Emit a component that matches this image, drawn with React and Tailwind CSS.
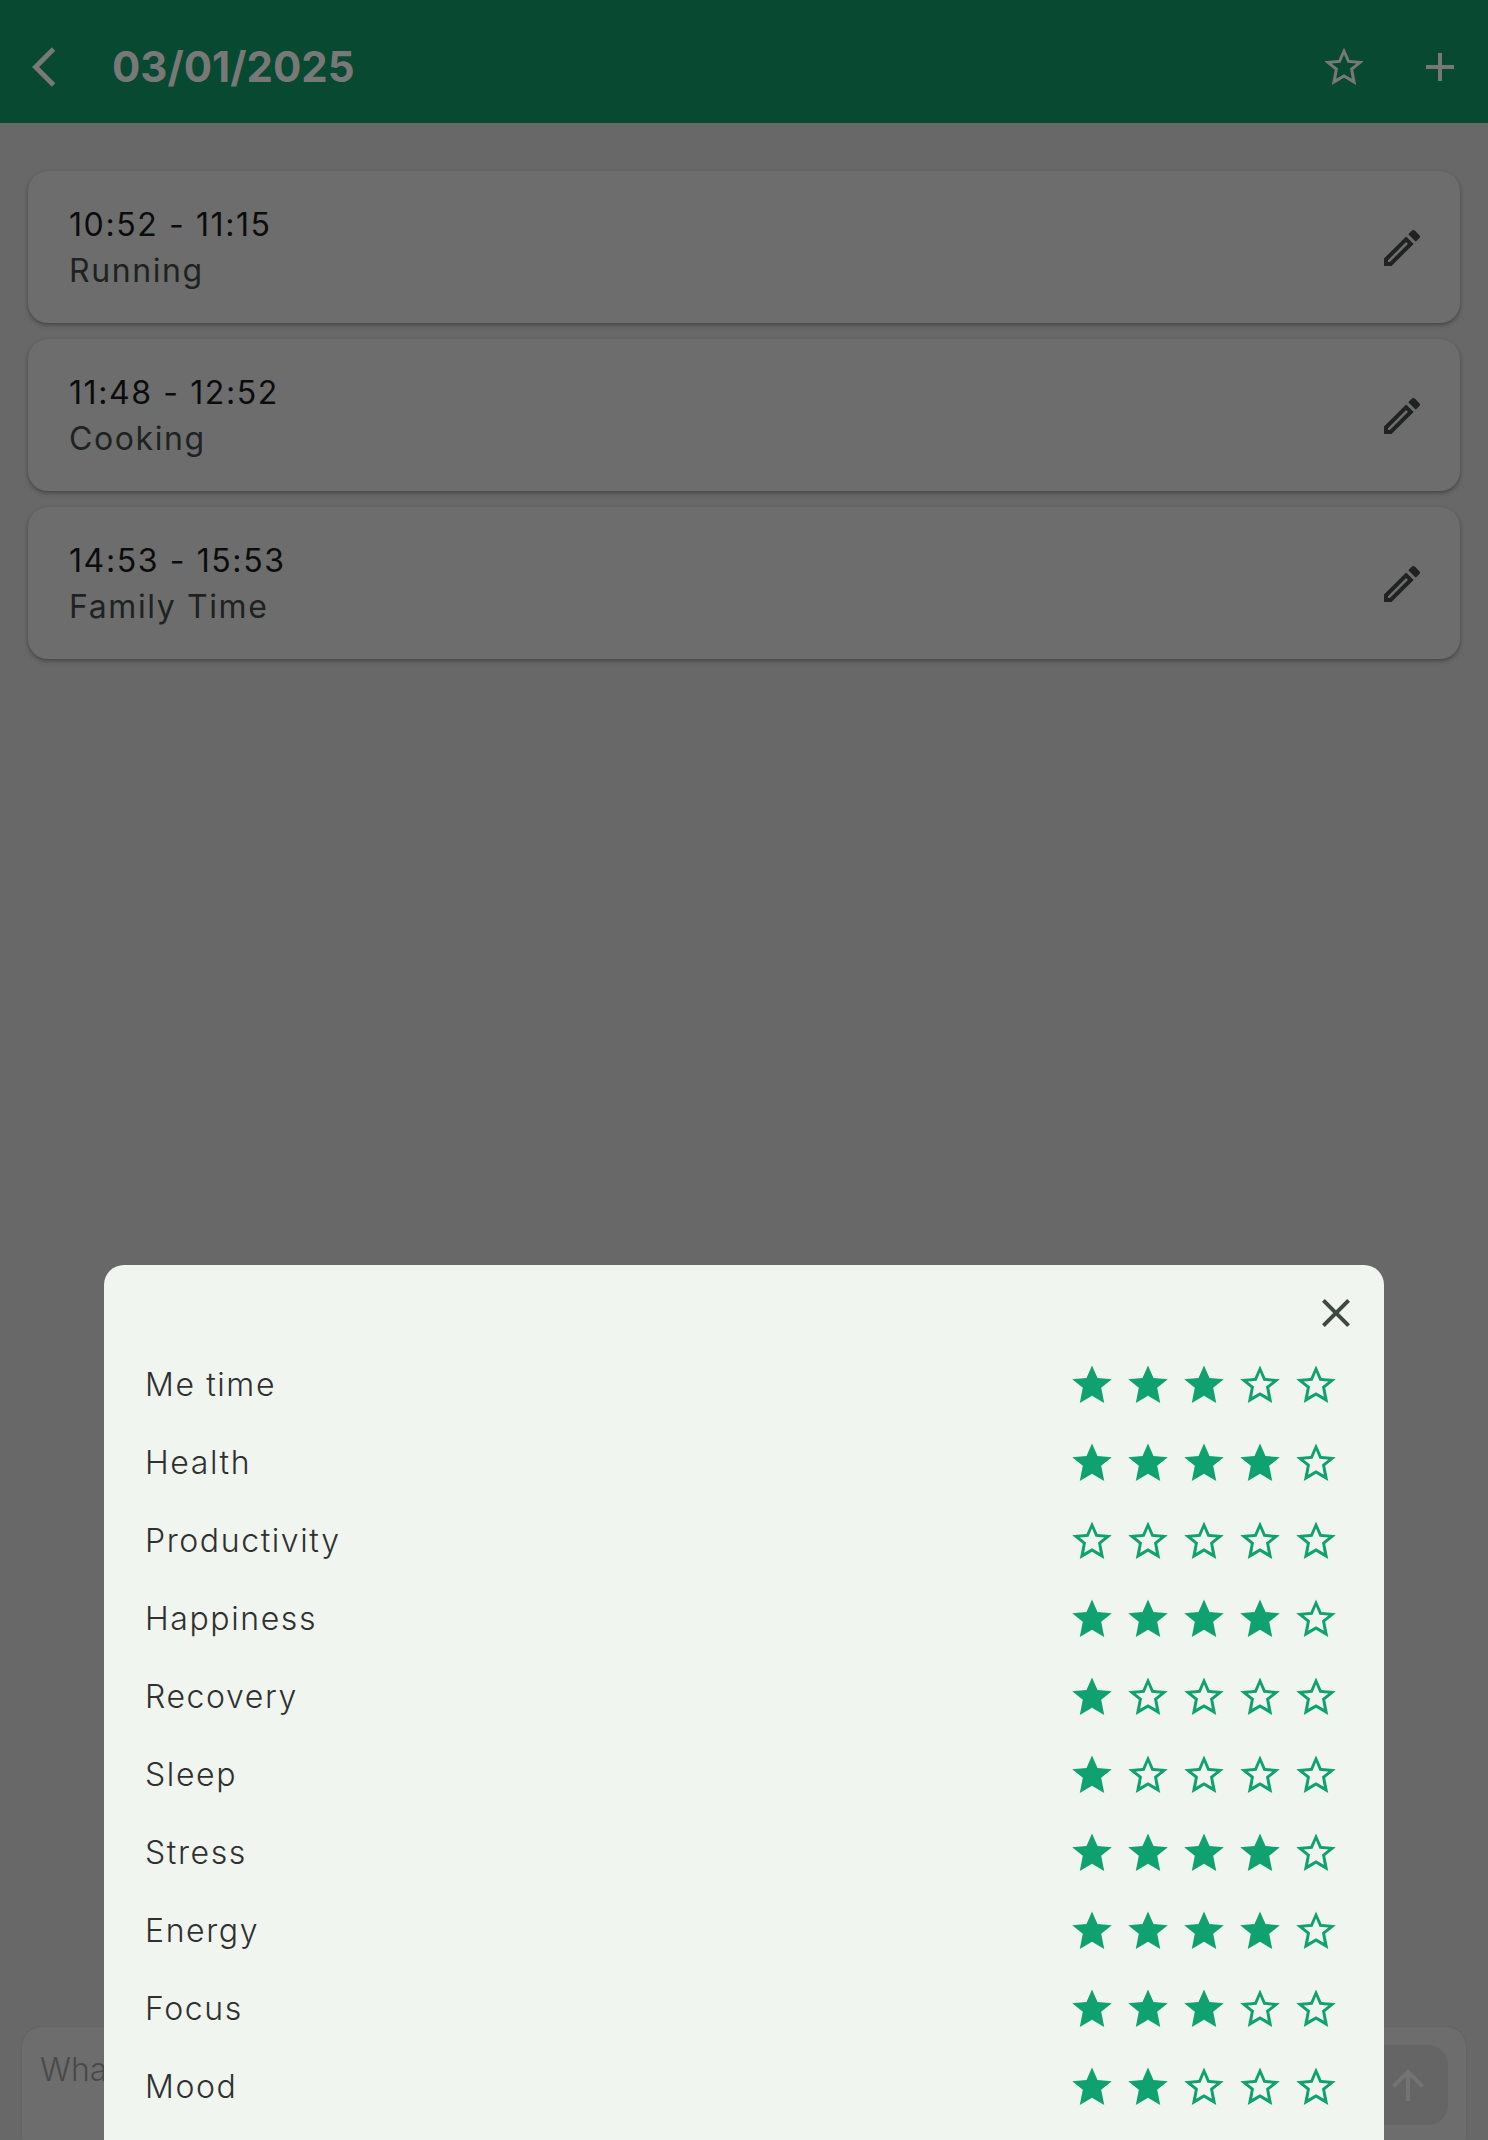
const entries = [
  { time: "10:52 - 11:15", name: "Running" },
  { time: "11:48 - 12:52", name: "Cooking" },
  { time: "14:53 - 15:53", name: "Family Time" },
];

const ratings = [
  ["Me time", 3],
  ["Health", 4],
  ["Productivity", 0],
  ["Happiness", 4],
  ["Recovery", 1],
  ["Sleep", 1],
  ["Stress", 4],
  ["Energy", 4],
  ["Focus", 3],
  ["Mood", 2],
];

function Icon({ d }) {
  return (
    <svg viewBox="0 0 24 24" className="size-12 shrink-0" fill="currentColor" aria-hidden="true">
      <path d={d} />
    </svg>
  );
}

const backPath = "M11.67 3.87 9.9 2.1 0 12l9.9 9.9 1.77-1.77L3.54 12z";
const plusPath = "M19 13h-6v6h-2v-6H5v-2h6V5h2v6h6z";
const upPath = "M4 12l1.41 1.41L11 7.83V20h2V7.83l5.58 5.59L20 12l-8-8z";
const closePath =
  "M19 6.41 17.59 5 12 10.59 6.41 5 5 6.41 10.59 12 5 17.59 6.41 19 12 13.41 17.59 19 19 17.59 13.41 12z";
const pencilPath =
  "M14.06 9.02l.92.92L5.92 19H5v-.92l9.06-9.06M17.66 3c-.25 0-.51.1-.7.29l-1.83 1.83 3.75 3.75 1.83-1.83c.39-.39.39-1.02 0-1.41l-2.34-2.34c-.2-.2-.45-.29-.71-.29zm-3.6 3.19L3 17.25V21h3.75L17.81 9.94l-3.75-3.75z";

function Star({ filled }) {
  return (
    <svg viewBox="0 0 48 48" className="size-12 shrink-0" fill="currentColor" fillRule="evenodd" aria-hidden="true">
      <path
        d={
          filled
            ? "M24 4.5 29.5 17 43.8 18.3 33.2 26.8 36.2 42 24 34.8 11.8 42 14.8 26.8 4.2 18.3 18.5 17z"
            : "M24 4.5 29.5 17 43.8 18.3 33.2 26.8 36.2 42 24 34.8 11.8 42 14.8 26.8 4.2 18.3 18.5 17zM24 11.4 20.5 19.8 11.6 20.6 18 25.6 16.2 35.8 24 31.2 31.8 35.8 30 25.6 36.4 20.6 27.5 19.8z"
        }
      />
    </svg>
  );
}

export default function App() {
  return (
    <div className="relative flex h-screen flex-col overflow-hidden bg-[#686868] font-['Inter',sans-serif] text-[32px]">
      <header className="flex shrink-0 items-center bg-[#074931] pt-[19px] pb-2 text-[#797878]">
        <button type="button" aria-label="Back" className="flex h-24 w-28 items-center pl-8">
          <Icon d={backPath} />
        </button>
        <h1 className="flex-1 text-[42px] leading-none font-bold">03/01/2025</h1>
        <button type="button" aria-label="Rate day" className="flex size-24 items-center justify-center">
          <Star />
        </button>
        <button type="button" aria-label="Add entry" className="flex size-24 items-center justify-center">
          <Icon d={plusPath} />
        </button>
      </header>

      <main className="flex-1 px-7 pt-12">
        <ul className="flex flex-col gap-4">
          {entries.map((e) => (
            <li
              key={e.time}
              className="flex items-center justify-between rounded-[20px] bg-[#6d6d6d] pt-[31px] pr-[18px] pb-[29px] pl-[41px] shadow-[0_2px_4px_rgba(0,0,0,0.35)]"
            >
              <div className="leading-[46px] tracking-wider">
                <p className="text-[#0c0c0c]">{e.time}</p>
                <p className="text-[#1e2321]">{e.name}</p>
              </div>
              <button
                type="button"
                aria-label={`Edit ${e.name}`}
                className="flex size-20 items-center justify-center text-[#1e2321]"
              >
                <Icon d={pencilPath} />
              </button>
            </li>
          ))}
        </ul>
      </main>

      <form className="mx-[22px] flex h-[113px] shrink-0 items-start rounded-t-[20px] bg-[#6d6d6d] pt-[18px] pr-[18px] pl-[18px] shadow-[0_0_2px_rgba(0,0,0,0.12)]">
        <textarea
          aria-label="Message"
          placeholder="What"
          className="h-20 flex-1 resize-none bg-transparent pt-[5px] leading-[40px] font-light outline-none placeholder:text-[#494949]"
        />
        <button
          type="button"
          aria-label="Send"
          className="flex size-20 items-center justify-center rounded-[20px] bg-[#656565] text-[#737373]"
        >
          <Icon d={upPath} />
        </button>
      </form>

      <div className="absolute inset-0 flex items-end justify-center">
        <section
          role="dialog"
          aria-label="Ratings"
          className="w-full max-w-[1280px] rounded-t-[20px] bg-[#f0f5ef] pb-[14px]"
        >
          <div className="flex h-[81px] justify-end pt-4 pr-4">
            <button
              type="button"
              aria-label="Close"
              className="flex size-16 items-center justify-center text-[#3f4944]"
            >
              <Icon d={closePath} />
            </button>
          </div>
          <ul>
            {ratings.map(([label, value]) => (
              <li key={label} className="flex h-[78px] items-center justify-between pr-11 pl-[41px]">
                <span className="font-light tracking-wider text-[#303030]">{label}</span>
                <div className="flex gap-2 text-[#10a170]">
                  {[1, 2, 3, 4, 5].map((n) => (
                    <button key={n} type="button" aria-label={`${label}: ${n} of 5`}>
                      <Star filled={n <= value} />
                    </button>
                  ))}
                </div>
              </li>
            ))}
          </ul>
        </section>
      </div>
    </div>
  );
}
